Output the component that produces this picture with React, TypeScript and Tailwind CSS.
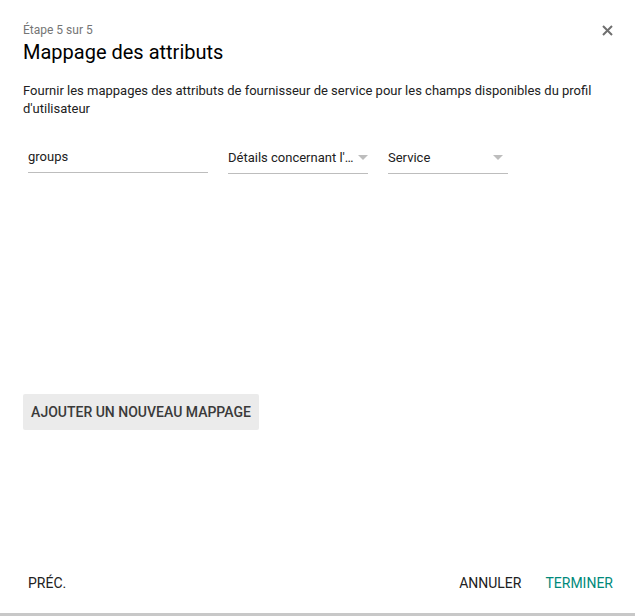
import React from 'react';

function Caret() {
  return (
    <svg width="10" height="5" viewBox="0 0 10 5" className="shrink-0">
      <path d="M0 0 L10 0 L5 5 Z" fill="#bdbdbd" />
    </svg>
  );
}

export default function App() {
  return (
    <div className="flex h-[616px] w-[635px] flex-col bg-white font-['Roboto',sans-serif]">
      <div className="flex flex-1 flex-col border-b-[3px] border-[#c8c8c8]">
        <div className="flex items-start justify-between pl-[23px] pr-[20px] pt-[22px]">
          <div>
            <div className="text-[12px] leading-[16px] text-[#757575]">Étape 5 sur 5</div>
            <h1 className="text-[20px] leading-[28px] text-[#000000]">Mappage des attributs</h1>
          </div>
          <button aria-label="Fermer" className="mt-[1px] p-[2px]">
            <svg width="11" height="11" viewBox="0 0 11 11">
              <path d="M1 1 L10 10 M10 1 L1 10" stroke="#6f6f6f" strokeWidth="2" />
            </svg>
          </button>
        </div>

        <p className="mt-[16px] pl-[23px] pr-[30px] text-[13px] leading-[18px] text-[#212121]">
          Fournir les mappages des attributs de fournisseur de service pour les champs disponibles du profil d'utilisateur
        </p>

        <div className="mt-[30px] flex items-start gap-[20px] pl-[28px]">
          <div className="flex h-[25px] w-[180px] items-start border-b border-[#bdbdbd] text-[13px] leading-[18px] text-[#212121]">
            groups
          </div>
          <div className="flex h-[26px] w-[140px] items-start justify-between border-b border-[#bdbdbd] pt-[1px] text-[13px] leading-[18px] text-[#212121]">
            <span className="min-w-0 truncate">Détails concernant l'utilisateur</span>
            <span className="mt-[6px] shrink-0"><Caret /></span>
          </div>
          <div className="flex h-[26px] w-[120px] items-start justify-between border-b border-[#bdbdbd] pt-[1px] pr-[5px] text-[13px] leading-[18px] text-[#212121]">
            <span>Service</span>
            <span className="mt-[6px] shrink-0"><Caret /></span>
          </div>
        </div>

        <div className="mt-[220px] pl-[23px]">
          <button className="h-[36px] w-[236px] rounded-[2px] bg-[#ebebeb] text-[14px] font-medium uppercase text-[#3a3a3a]">
            Ajouter un nouveau mappage
          </button>
        </div>

        <div className="mt-auto flex items-center justify-between pb-[19px] pl-[28px] pr-[22px]">
          <button className="text-[14px] uppercase text-[#212121]">Préc.</button>
          <div className="flex gap-[24px]">
            <button className="text-[14px] uppercase text-[#212121]">Annuler</button>
            <button className="text-[14px] uppercase text-[#00897b]">Terminer</button>
          </div>
        </div>
      </div>
    </div>
  );
}
